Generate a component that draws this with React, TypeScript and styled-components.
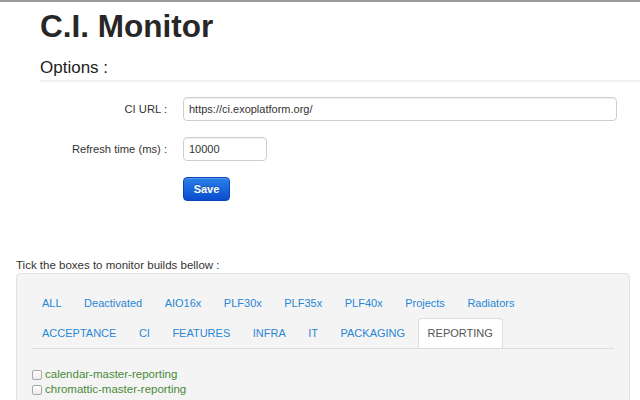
import React from "react";
import styled, { createGlobalStyle } from "styled-components";

// Global page reset
const GlobalStyle = createGlobalStyle`
  html, body {
    margin: 0;
    padding: 0;
    overflow: hidden;
    background: #ffffff;
  }

  body {
    font-family: "Liberation Sans", Arial, Helvetica, sans-serif;
    color: #333333;
  }
`;

// Page wrapper (grey strip at the very top of the window)
const Page = styled.div`
  border-top: 2px solid #9a9a9a;
  width: 640px;
  height: 398px;
`;

// Header: title + subtitle with a light rule under it
const Header = styled.header`
  margin-left: 40px;
  padding-bottom: 2px;
  border-bottom: 2px solid #f1f1f1;
`;

const Title = styled.h1`
  margin: 6px 0 0;
  font-size: 31.5px;
  line-height: 36px;
  font-weight: bold;
  color: #272727;
`;

const SubTitle = styled.h2`
  margin: 14px 0 0;
  font-size: 17px;
  line-height: 20px;
  font-weight: normal;
  color: #222222;
`;

// Options form: label column | field column
const OptionsForm = styled.form`
  display: grid;
  grid-template-columns: 167px 434px;
  column-gap: 16px;
  row-gap: 16px;
  align-items: center;
  margin-top: 15px;
`;

const FieldLabel = styled.label`
  text-align: right;
  font-size: 11.2px;
  color: #333333;
`;

const TextInput = styled.input<{ $width?: number }>`
  box-sizing: border-box;
  width: ${(p) => (p.$width ? `${p.$width}px` : "100%")};
  height: 24px;
  padding: 0 5px;
  border: 1px solid #cfcfcf;
  border-radius: 4px;
  box-shadow: inset 0 1px 1px rgba(0, 0, 0, 0.06);
  font-family: "Liberation Sans", Arial, sans-serif;
  font-size: 11px;
  color: #333333;
  background: #ffffff;
  outline: none;
`;

const SaveButton = styled.button`
  grid-column: 2;
  justify-self: start;
  width: 47px;
  height: 24px;
  padding: 0;
  border: 1px solid #0a46b8;
  border-radius: 4px;
  background: linear-gradient(to bottom, #2a80e8, #0a4dcf);
  box-shadow: inset 0 1px 0 rgba(255, 255, 255, 0.2);
  color: #ffffff;
  font-family: "Liberation Sans", Arial, sans-serif;
  font-size: 11px;
  font-weight: bold;
  text-shadow: 0 -1px 0 rgba(0, 0, 0, 0.25);
  cursor: pointer;
`;

// Builds section
const Hint = styled.p`
  margin: 57px 0 1px 16px;
  font-size: 11.5px;
  line-height: 14px;
  color: #333333;
`;

const Panel = styled.div`
  box-sizing: border-box;
  width: 614px;
  margin-left: 16px;
  padding: 14px 15px;
  background: #f4f4f4;
  border: 1px solid #e3e3e3;
  border-radius: 4px;
`;

const Tabs = styled.ul`
  display: flex;
  flex-wrap: wrap;
  margin: 0;
  padding: 0;
  list-style: none;
  border-bottom: 1px solid #dddddd;
`;

const Tab = styled.li<{ $active?: boolean }>`
  box-sizing: border-box;
  height: 30px;
  line-height: 28px;
  padding: 0 9px;
  margin-right: 2.5px;
  font-size: 11px;
  border: 1px solid ${(p) => (p.$active ? "#dddddd" : "transparent")};
  border-bottom: 0;
  border-radius: 4px 4px 0 0;
  background: ${(p) => (p.$active ? "#ffffff" : "transparent")};
  color: ${(p) => (p.$active ? "#555555" : "#2a86d6")};
  cursor: pointer;
`;

const BuildList = styled.div`
  padding-top: 17px;
`;

const BuildRow = styled.label`
  display: flex;
  align-items: center;
  height: 15px;
  font-size: 11.5px;
  color: #4a8a38;
`;

const Check = styled.input`
  appearance: none;
  box-sizing: border-box;
  width: 10px;
  height: 10px;
  margin: 2px 3px 0 0;
  border: 1px solid #a9a9a9;
  border-radius: 2px;
  background: linear-gradient(to bottom, #ffffff, #ececec);
`;

const tabRows = [
  ["ALL", "Deactivated", "AIO16x", "PLF30x", "PLF35x", "PLF40x", "Projects", "Radiators"],
  ["ACCEPTANCE", "CI", "FEATURES", "INFRA", "IT", "PACKAGING", "REPORTING"],
];

const builds = ["calendar-master-reporting", "chromattic-master-reporting"];

const App = () => {
  const active = "REPORTING";

  return (
    <Page>
      <GlobalStyle />
      <Header>
        <Title>C.I. Monitor</Title>
        <SubTitle>Options :</SubTitle>
      </Header>

      <OptionsForm onSubmit={(e) => e.preventDefault()}>
        <FieldLabel htmlFor="ci-url">CI URL :</FieldLabel>
        <TextInput id="ci-url" defaultValue="https://ci.exoplatform.org/" />
        <FieldLabel htmlFor="refresh">Refresh time (ms) :</FieldLabel>
        <TextInput id="refresh" $width={84} defaultValue="10000" />
        <SaveButton type="submit">Save</SaveButton>
      </OptionsForm>

      <Hint>Tick the boxes to monitor builds bellow :</Hint>
      <Panel>
        <Tabs>
          {tabRows.flat().map((name) => (
            <Tab key={name} $active={name === active}>
              {name}
            </Tab>
          ))}
        </Tabs>
        <BuildList>
          {builds.map((b) => (
            <BuildRow key={b}>
              <Check type="checkbox" />
              {b}
            </BuildRow>
          ))}
        </BuildList>
      </Panel>
    </Page>
  );
};

export default App;
